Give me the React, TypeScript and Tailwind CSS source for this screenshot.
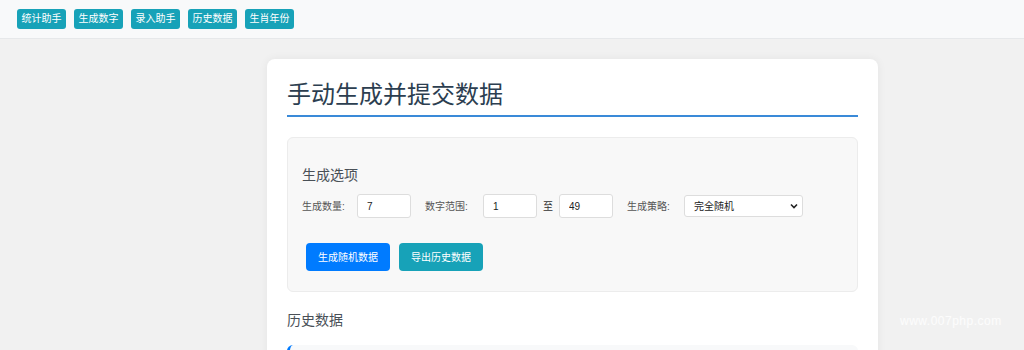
import React from 'react';

const NAV = ['统计助手', '生成数字', '录入助手', '历史数据', '生肖年份'];

export default function App() {
    return (
        <div className="h-[350px] bg-[#f1f1f1] font-['Liberation_Sans','Noto_Sans_CJK_SC',sans-serif] relative overflow-hidden">
            {/* top nav */}
            <div className="h-[39px] bg-[#f8f9fa] border-b border-[#e6e8ea] flex items-center gap-2 pl-[17px]">
                {NAV.map(n => (
                    <button key={n} className="h-[20px] w-[49px] rounded-[3px] bg-[#17a2b8] text-white text-[10px] leading-none">{n}</button>
                ))}
            </div>

            {/* card */}
            <div className="ml-[267px] mt-[20px] w-[611px] bg-white rounded-[8px] shadow-[0_0_10px_rgba(0,0,0,0.06)] px-[20px] pt-[20px] pb-4">
                <h1 className="text-[24px] leading-[32px] text-[#2c3e50] pb-[4px] border-b-2 border-[#3a8ad8]">手动生成并提交数据</h1>

                <div className="mt-[20px] bg-[#f8f8f8] border border-[#ececec] rounded-[6px] px-[14px] pt-[28px] pb-[20px]">
                    <h3 className="text-[14px] leading-[18px] text-[#495057]">生成选项</h3>
                    <div className="mt-[10px] flex items-center text-[10px] text-[#555]">
                        <span className="w-[55px]">生成数量:</span>
                        <input readOnly value="7" className="w-[54px] h-[24px] bg-white border border-[#ddd] rounded-[3px] px-[9px] text-[10px] text-[#222] outline-none" />
                        <span className="ml-[14px] w-[58px]">数字范围:</span>
                        <input readOnly value="1" className="w-[54px] h-[24px] bg-white border border-[#ddd] rounded-[3px] px-[9px] text-[10px] text-[#222] outline-none" />
                        <span className="ml-[6px] mr-[6px] text-[#333]">至</span>
                        <input readOnly value="49" className="w-[54px] h-[24px] bg-white border border-[#ddd] rounded-[3px] px-[9px] text-[10px] text-[#222] outline-none" />
                        <span className="ml-[14px] w-[57px]">生成策略:</span>
                        <div className="w-[119px] h-[22px] bg-white border border-[#ddd] rounded-[3px] flex items-center justify-between pl-[9px] pr-[4px] text-[10px] text-[#222]">
                            <span>完全随机</span>
                            <svg width="8" height="6" viewBox="0 0 8 6"><path d="M1 1.5 L4 4.5 L7 1.5" fill="none" stroke="#222" strokeWidth="1.6" /></svg>
                        </div>
                    </div>
                    <div className="mt-[25px] ml-[4px] flex gap-[9px]">
                        <button className="w-[84px] h-[28px] rounded-[4px] bg-[#007bff] text-white text-[10px]">生成随机数据</button>
                        <button className="w-[84px] h-[28px] rounded-[4px] bg-[#17a2b8] text-white text-[10px]">导出历史数据</button>
                    </div>
                </div>

                <h3 className="mt-[19px] text-[14px] leading-[18px] text-[#495057]">历史数据</h3>
                <div className="mt-[16px] h-[40px] bg-[#f8f9fa] border-l-[3px] border-[#007bff] rounded-[6px]" />
            </div>

            {/* watermark */}
            <div className="absolute left-[900px] top-[312px] text-[12px] text-white/80 tracking-[0.5px]">www.007php.com</div>
        </div>
    );
}
